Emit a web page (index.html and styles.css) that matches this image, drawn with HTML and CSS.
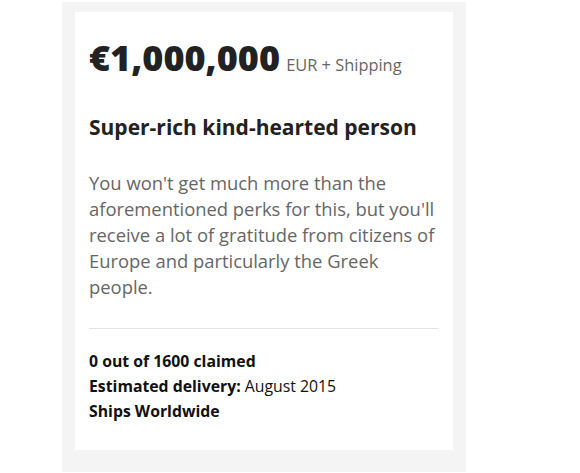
FILE: index.html
```html
<!DOCTYPE html>
<html>
<head>
<meta charset="utf-8">
<link rel="stylesheet" href="styles.css">
</head>
<body>
<div class="panel">
  <div class="card">
    <div class="price"><span class="amount">€1,000,000</span> <span class="currency">EUR + Shipping</span></div>
    <h3 class="title">Super-rich kind-hearted person</h3>
    <p class="desc">You won't get much more than the aforementioned perks for this, but you'll receive a lot of gratitude from citizens of Europe and particularly the Greek people.</p>
    <div class="divider"></div>
    <div class="meta">
      <div class="meta-line strong">0 out of 1600 claimed</div>
      <div class="meta-line"><span class="strong">Estimated delivery:</span> August 2015</div>
      <div class="meta-line strong">Ships Worldwide</div>
    </div>
  </div>
</div>
</body>
</html>
```
FILE: styles.css
```css
html, body {
  margin: 0;
  padding: 0;
  background: #ffffff;
}
body {
  font-family: "Open Sans", "Liberation Sans", Arial, sans-serif;
  color: #222222;
}
.panel {
  box-sizing: border-box;
  margin: 2px 0 0 62px;
  width: 404px;
  height: 470px;
  padding: 10px 13px 22px 13px;
  background: #f4f4f4;
}
.card {
  box-sizing: border-box;
  height: 438px;
  background: #ffffff;
  padding: 26px 15px 0 14px;
}
.price {
  line-height: 40px;
  white-space: nowrap;
}
.amount {
  font-size: 36px;
  font-weight: 800;
  color: #222222;
}
.currency {
  margin-left: 2px;
  font-size: 16.4px;
  color: #666666;
}
.title {
  margin: 29px 0 0 0;
  font-size: 21px;
  line-height: 26px;
  font-weight: 700;
  color: #222222;
}
.desc {
  margin: 30px 0 0 0;
  font-size: 18.4px;
  line-height: 26px;
  color: #666666;
}
.divider {
  margin-top: 28px;
  border-top: 1px solid #e3e3e3;
}
.meta {
  margin-top: 20px;
  font-size: 15.8px;
  line-height: 25px;
  color: #111111;
}
.strong {
  font-weight: 700;
}
```
